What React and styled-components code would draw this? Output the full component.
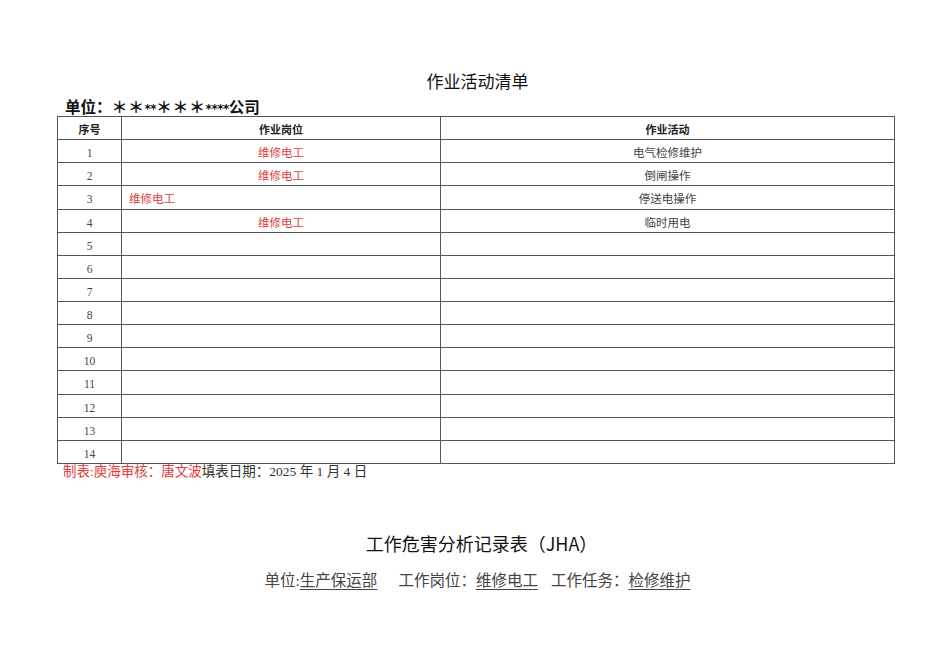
import React from "react";
import styled, { createGlobalStyle } from "styled-components";

const GlobalStyle = createGlobalStyle`
  html, body {
    margin: 0;
    padding: 0;
    background: #fff;
  }
  body {
    font-family: "Liberation Serif", "Noto Sans CJK SC", serif;
    color: #333;
  }
`;

const Page = styled.div`
  width: 950px;
  height: 672px;
  box-sizing: border-box;
  padding: 71px 56px 0 57px;
  display: flex;
  flex-direction: column;
`;

const Title = styled.h1`
  margin: 0;
  font-family: "Noto Sans CJK SC", sans-serif;
  font-weight: 400;
  font-size: 17px;
  line-height: 20px;
  color: #111;
  text-align: center;
  padding-left: 4px;
`;

const Unit = styled.div`
  margin: 6px 0 0 8px;
  font-family: "Liberation Sans", "Noto Sans CJK SC", sans-serif;
  font-weight: 700;
  font-size: 15.5px;
  line-height: 19px;
  color: #111;
  height: 19px;
  white-space: nowrap;
`;

const Star = styled.span`
  font-family: ${p => (p.big ? `"Noto Sans CJK SC", sans-serif` : `"DejaVu Sans", sans-serif`)};
  font-size: ${p => (p.big ? "16px" : "12px")};
  letter-spacing: ${p => (p.big ? "0.5px" : "-0.5px")};
`;

const Table = styled.table`
  border-collapse: collapse;
  width: 837px;
  table-layout: fixed;
  border: 1px solid #555;
`;

const Row = styled.tr`
  height: 23.13px;
`;

const Cell = styled.td`
  border: 1px solid #555;
  padding: 4px 0 0;
  box-sizing: border-box;
  font-size: ${p => (p.head ? "11px" : "11.5px")};
  font-weight: ${p => (p.head ? 700 : 400)};
  font-family: ${p =>
    p.head
      ? `"Liberation Sans", "Noto Sans CJK SC", sans-serif`
      : `"Liberation Serif", "Noto Sans CJK SC", serif`};
  color: ${p => (p.red ? "#e23b3b" : p.head ? "#222" : "#444")};
  text-align: ${p => (p.left ? "left" : "center")};
  padding-left: ${p => (p.left ? "7px" : "0")};
  line-height: 16px;
  vertical-align: middle;
`;

const Footer = styled.div`
  margin: 0 0 0 6px;
  font-size: 13.5px;
  line-height: 15px;
  color: #333;
`;

const Red = styled.span`
  color: #e23b3b;
`;

const JhaTitle = styled.h2`
  margin: 53px 0 0;
  font-family: "Noto Sans CJK SC", sans-serif;
  font-weight: 400;
  font-size: 18px;
  line-height: 22px;
  color: #111;
  text-align: center;
  padding-left: 12px;
`;

const InfoLine = styled.div`
  margin-top: 17px;
  display: flex;
  justify-content: center;
  padding-left: 4px;
  font-size: 15.5px;
  line-height: 20px;
  color: #444;
`;

const InfoItem = styled.span`
  margin-right: ${p => p.gap || 0}px;
`;

const Under = styled.span`
  text-decoration: underline;
  text-underline-offset: 3px;
`;

const rows = [
  { post: "维修电工", act: "电气检修维护" },
  { post: "维修电工", act: "倒闸操作" },
  { post: "维修电工", act: "停送电操作", left: true },
  { post: "维修电工", act: "临时用电" },
];

export default function App() {
  const all = Array.from({ length: 14 }, (_, i) => rows[i] || {});
  return (
    <>
      <GlobalStyle />
      <Page>
        <Title>作业活动清单</Title>
        <Unit>
          单位：<Star big>＊＊</Star>
          <Star>**</Star>
          <Star big>＊＊＊</Star>
          <Star>****</Star>公司
        </Unit>
        <Table>
          <colgroup>
            <col style={{ width: 64 }} />
            <col style={{ width: 319 }} />
            <col style={{ width: 454 }} />
          </colgroup>
          <thead>
            <Row>
              <Cell as="th" head>序号</Cell>
              <Cell as="th" head>作业岗位</Cell>
              <Cell as="th" head>作业活动</Cell>
            </Row>
          </thead>
          <tbody>
            {all.map((r, i) => (
              <Row key={i}>
                <Cell>{i + 1}</Cell>
                <Cell red left={r.left}>{r.post || ""}</Cell>
                <Cell>{r.act || ""}</Cell>
              </Row>
            ))}
          </tbody>
        </Table>
        <Footer>
          <Red>制表:庾海审核：唐文波</Red>填表日期：2025 年 1 月 4 日
        </Footer>
        <JhaTitle>工作危害分析记录表（JHA）</JhaTitle>
        <InfoLine>
          <InfoItem gap={21}>
            单位:<Under>生产保运部</Under>
          </InfoItem>
          <InfoItem gap={13}>
            工作岗位：<Under>维修电工</Under>
          </InfoItem>
          <InfoItem>
            工作任务：<Under>检修维护</Under>
          </InfoItem>
        </InfoLine>
      </Page>
    </>
  );
}
